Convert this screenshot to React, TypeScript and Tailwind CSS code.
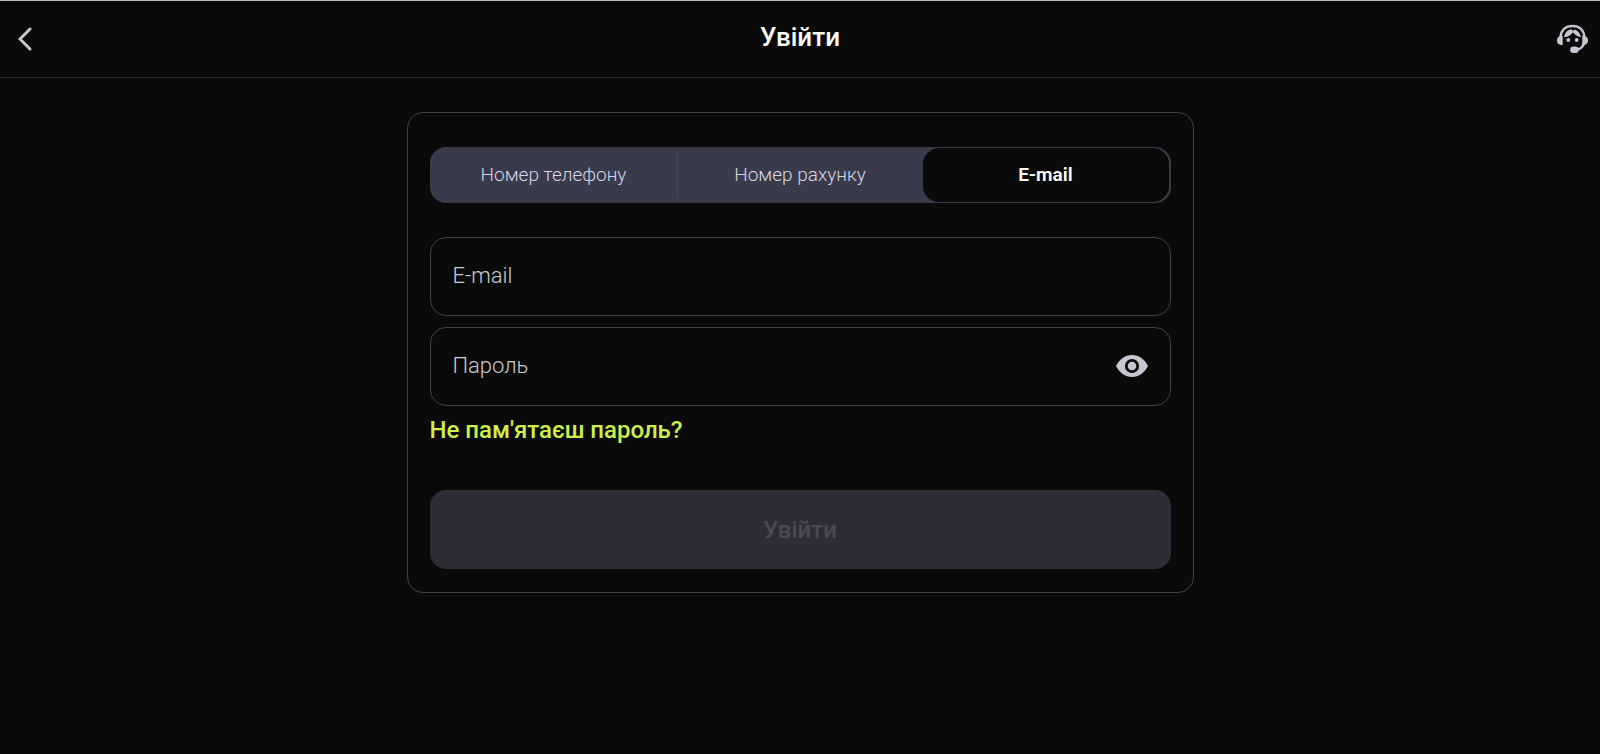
import { useState } from "react";

const tabs = [
  { id: "phone", label: "Номер телефону" },
  { id: "account", label: "Номер рахунку" },
  { id: "email", label: "E-mail" },
];

export default function App() {
  const [active, setActive] = useState("email");
  const [showPassword, setShowPassword] = useState(false);

  return (
    <div className="min-h-screen border-t border-[#b7bdba] bg-[#0a0a0a] font-['Roboto',sans-serif] text-[#c9c6d3]">
      {/* Header */}
      <header className="flex h-[77px] items-center justify-between border-b border-[#2a2a2b] px-3">
        <button type="button" aria-label="Назад" className="flex h-10 w-8 items-center pl-1.5">
          <BackIcon />
        </button>
        <h1 className="pb-1 text-[26px] leading-8 font-medium text-white">Увійти</h1>
        <button type="button" aria-label="Підтримка" className="flex h-10 w-8 items-center justify-center">
          <SupportIcon />
        </button>
      </header>

      <main className="px-4 pt-[34px]">
        <form
          className="mx-auto flex max-w-[787px] flex-col rounded-2xl border border-[#414148] px-[22px] pt-[34px] pb-[23px]"
          onSubmit={(e) => e.preventDefault()}
        >
          {/* Login method */}
          <div role="tablist" aria-label="Спосіб входу" className="flex h-14 rounded-2xl bg-[#393b4a] p-px pr-0.5">
            {tabs.map((tab, idx) => (
              <div key={tab.id} className="flex flex-1 items-center">
                {idx === 1 && <span className="h-[46px] w-px bg-[#444653]" aria-hidden="true" />}
                <button
                  type="button"
                  role="tab"
                  aria-selected={active === tab.id}
                  onClick={() => setActive(tab.id)}
                  className={`h-full flex-1 rounded-2xl text-[19px] ${
                    active === tab.id ? "bg-[#0a0a0a] font-semibold text-white" : "font-light text-[#d6d6e6]"
                  }`}
                >
                  {tab.label}
                </button>
              </div>
            ))}
          </div>

          {/* Fields */}
          <div className="mt-[34px] flex flex-col gap-[11px]">
            <input
              type="email"
              aria-label="E-mail"
              placeholder="E-mail"
              className="h-[79px] w-full rounded-2xl border border-[#414148] bg-transparent px-[22px] pb-0.5 text-[22px] font-light outline-none placeholder:text-[#cccad2]"
            />
            <div className="flex h-[79px] items-center rounded-2xl border border-[#414148] pr-[22px] pb-0.5">
              <input
                type={showPassword ? "text" : "password"}
                aria-label="Пароль"
                placeholder="Пароль"
                className="h-full min-w-0 flex-1 bg-transparent px-[22px] text-[22px] font-light outline-none placeholder:text-[#cccad2]"
              />
              <button type="button" aria-label="Показати пароль" onClick={() => setShowPassword(!showPassword)}>
                <EyeIcon />
              </button>
            </div>
          </div>

          <a href="#reset" className="mt-2 self-start text-2xl font-medium text-[#cdf048]">
            Не пам'ятаєш пароль?
          </a>

          <button
            type="submit"
            disabled
            className="mt-11 h-[79px] rounded-2xl bg-[#2e2c36] text-2xl font-medium text-[#4a4a57]"
          >
            Увійти
          </button>
        </form>
      </main>
    </div>
  );
}

function BackIcon() {
  return (
    <svg width="14" height="24" viewBox="0 0 14 24" fill="none" aria-hidden="true">
      <path d="M12 2 2 12l10 10" stroke="#c9c6d0" strokeWidth="3" strokeLinecap="round" />
    </svg>
  );
}

function SupportIcon() {
  return (
    <svg width="32" height="30" viewBox="0 0 32 30" fill="#c9c6d3" aria-hidden="true">
      <path
        d="M4.500 13C5 6 9.800 2 16.500 2S28 6 28.300 13V17C28 22 25 25.500 19 26"
        fill="none"
        stroke="#c9c6d3"
        strokeWidth="2.500"
      />
      <path d="M6.700 12V21H5Q1 20.500 1 16.500T4.500 12ZM26.300 12V21H28Q32 20.500 32 16.500T28.500 12Z" />
      <path d="M8 13.200C9 8.500 11.800 5.500 15.500 5.300L17 7 18.300 5.500C21.800 6.500 24.300 9.500 25 13.200 21.500 12.500 18.700 10.800 17 8.300 15 11.300 12 12.800 8 13.200Z" />
      <circle cx="12.300" cy="16" r="1.900" />
      <circle cx="20.700" cy="16" r="1.900" />
      <rect x="14.200" y="22.500" width="8.500" height="6.500" rx="3.200" />
    </svg>
  );
}

function EyeIcon() {
  return (
    <svg width="32" height="22" viewBox="0 0 32 22" aria-hidden="true">
      <path d="M16 0C9 0 3.200 4.500 0 11c3.200 6.500 9 11 16 11s12.800-4.500 16-11C28.800 4.500 23 0 16 0Z" fill="#c9c6d3" />
      <circle cx="16" cy="11" r="5.700" fill="#c9c6d3" stroke="#0a0a0a" strokeWidth="2.800" />
    </svg>
  );
}
